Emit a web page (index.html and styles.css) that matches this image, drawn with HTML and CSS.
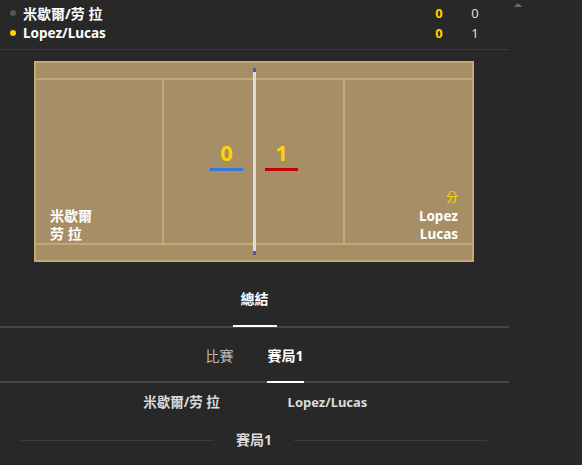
FILE: index.html
```html
<!DOCTYPE html>
<html lang="zh-Hant">
<head>
<meta charset="utf-8">
<title>Score</title>
<link rel="stylesheet" href="styles.css">
</head>
<body>
<div class="page">
  <main class="main">
    <header class="score-head">
      <div class="team-row">
        <span class="dot"></span>
        <span class="team-name cjk">米歇爾/劳 拉</span>
        <span class="sets">0</span>
        <span class="pts">0</span>
      </div>
      <div class="team-row">
        <span class="dot serving"></span>
        <span class="team-name">Lopez/Lucas</span>
        <span class="sets">0</span>
        <span class="pts">1</span>
      </div>
    </header>

    <div class="court-wrap">
      <div class="court">
        <div class="alley"></div>
        <div class="zone side-left">
          <div class="names cjk">米歇爾<br>劳 拉</div>
        </div>
        <div class="zone middle">
          <div class="score-block"><span class="num">0</span><span class="bar blue"></span></div>
          <div class="score-block"><span class="num">1</span><span class="bar red"></span></div>
        </div>
        <div class="zone side-right">
          <div class="names align-right"><span class="serve">分</span>Lopez<br>Lucas</div>
        </div>
        <div class="alley"></div>
        <div class="net"></div>
      </div>
    </div>

    <nav class="tabs primary">
      <span class="tab active">總結</span>
    </nav>
    <nav class="tabs secondary">
      <span class="tab">比賽</span>
      <span class="tab active">賽局1</span>
    </nav>

    <div class="pair-names">
      <span class="cjk">米歇爾/劳 拉</span>
      <span>Lopez/Lucas</span>
    </div>

    <div class="divider"><span>賽局1</span></div>
  </main>
  <aside class="scroll-side"><span class="arrow"></span></aside>
</div>
</body>
</html>
```

FILE: styles.css
```css
* { box-sizing: border-box; }
html, body {
  margin: 0;
  padding: 0;
  background: #282828;
}
body {
  font-family: "Noto Sans", "Noto Sans CJK TC", sans-serif;
  color: #fff;
  font-size: 13px;
}
.page {
  display: flex;
  width: 582px;
  height: 465px;
  overflow: hidden;
}
.main {
  width: 509px;
  flex: none;
}
.scroll-side {
  flex: 1;
  padding: 3px 0 0 5px;
}
.arrow {
  display: block;
  width: 0;
  height: 0;
  border-left: 4px solid transparent;
  border-right: 4px solid transparent;
  border-bottom: 4px solid #6a6a6a;
}

/* header */
.score-head {
  padding: 3px 0 6px;
  border-bottom: 1px solid #3a3a3a;
}
.team-row {
  display: flex;
  align-items: center;
  height: 20px;
  padding: 0 22px 0 10px;
  font-weight: 700;
}
.dot {
  width: 6px;
  height: 6px;
  border-radius: 50%;
  background: #555;
  margin-right: 7px;
}
.dot.serving { background: #ffd400; }
.team-name {
  flex: 1;
  font-size: 13.5px;
}
.team-name.cjk { font-size: 14px; }
.sets {
  width: 24px;
  text-align: center;
  color: #ffd400;
  font-weight: 700;
}
.pts {
  width: 24px;
  margin-left: 12px;
  text-align: center;
  color: #ddd;
  font-weight: 400;
}

/* court */
.court-wrap {
  padding: 11px 0 0 34px;
}
.court {
  position: relative;
  width: 440px;
  height: 201px;
  border: 2px solid #c6a874;
  background: #c6a874;
  display: grid;
  grid-template-columns: 126px 179px 127px;
  grid-template-rows: 15px 163px 15px;
  gap: 2px;
}
.alley {
  grid-column: 1 / -1;
  background: #a68f66;
}
.zone {
  background: #a68f66;
  display: flex;
  flex-direction: column;
  justify-content: flex-end;
  padding: 0 14px 0 14px;
}
.names {
  font-weight: 700;
  font-size: 13.5px;
  line-height: 18px;
  color: #fff;
}
.names.cjk { font-size: 14px; }
.names.align-right {
  text-align: right;
  display: flex;
  flex-direction: column;
  align-items: flex-end;
}
.serve {
  color: #ffd400;
  font-size: 12px;
  font-weight: 400;
}
.zone.middle {
  flex-direction: row;
  justify-content: center;
  align-items: flex-start;
  gap: 22px;
  padding: 61px 0 0 1px;
}
.score-block {
  width: 33px;
  display: flex;
  flex-direction: column;
  align-items: center;
}
.num {
  font-size: 22px;
  line-height: 22px;
  font-weight: 700;
  color: #ffd400;
}
.bar {
  width: 33px;
  height: 3px;
  margin-top: 5px;
}
.bar.blue { background: #3a78d8; }
.bar.red { background: #c40000; }
.net {
  position: absolute;
  left: 217px;
  top: 5px;
  width: 3px;
  height: 187px;
  background: #dcdcdc;
  border-top: 4px solid #4060a8;
  border-bottom: 4px solid #4060a8;
}

/* tabs */
.tabs {
  display: flex;
  justify-content: center;
  border-bottom: 2px solid #454545;
}
.tab {
  line-height: 20px;
  font-weight: 700;
  font-size: 14px;
  color: #fff;
}
.tabs.primary {
  padding-top: 27px;
}
.tabs.primary .tab {
  padding: 0 8px 16px;
  border-bottom: 2px solid transparent;
  margin-bottom: -1px;
}
.tabs.primary .tab.active { border-bottom-color: #fff; }
.tabs.secondary {
  padding: 18px 0 0 0;
  gap: 34px;
}
.tabs.secondary .tab {
  padding-bottom: 15px;
  border-bottom: 2px solid transparent;
  margin-bottom: -2px;
  color: #bdbdbd;
  font-weight: 400;
}
.tabs.secondary .tab.active {
  color: #fff;
  font-weight: 700;
  border-bottom-color: #fff;
}

/* names */
.pair-names {
  display: flex;
  justify-content: center;
  padding-top: 9px;
}
.pair-names span {
  width: 146px;
  text-align: center;
  line-height: 20px;
  font-weight: 700;
  font-size: 13px;
  color: #dcdcdc;
}
.pair-names span.cjk { font-size: 13.5px; }

.divider {
  display: flex;
  align-items: center;
  gap: 22px;
  padding: 0 22px 0 21px;
  margin-top: 18px;
  line-height: 20px;
  font-weight: 700;
  font-size: 14px;
  color: #dcdcdc;
}
.divider::before,
.divider::after {
  content: "";
  flex: 1;
  height: 1px;
  background: #3c3c3c;
}
```
